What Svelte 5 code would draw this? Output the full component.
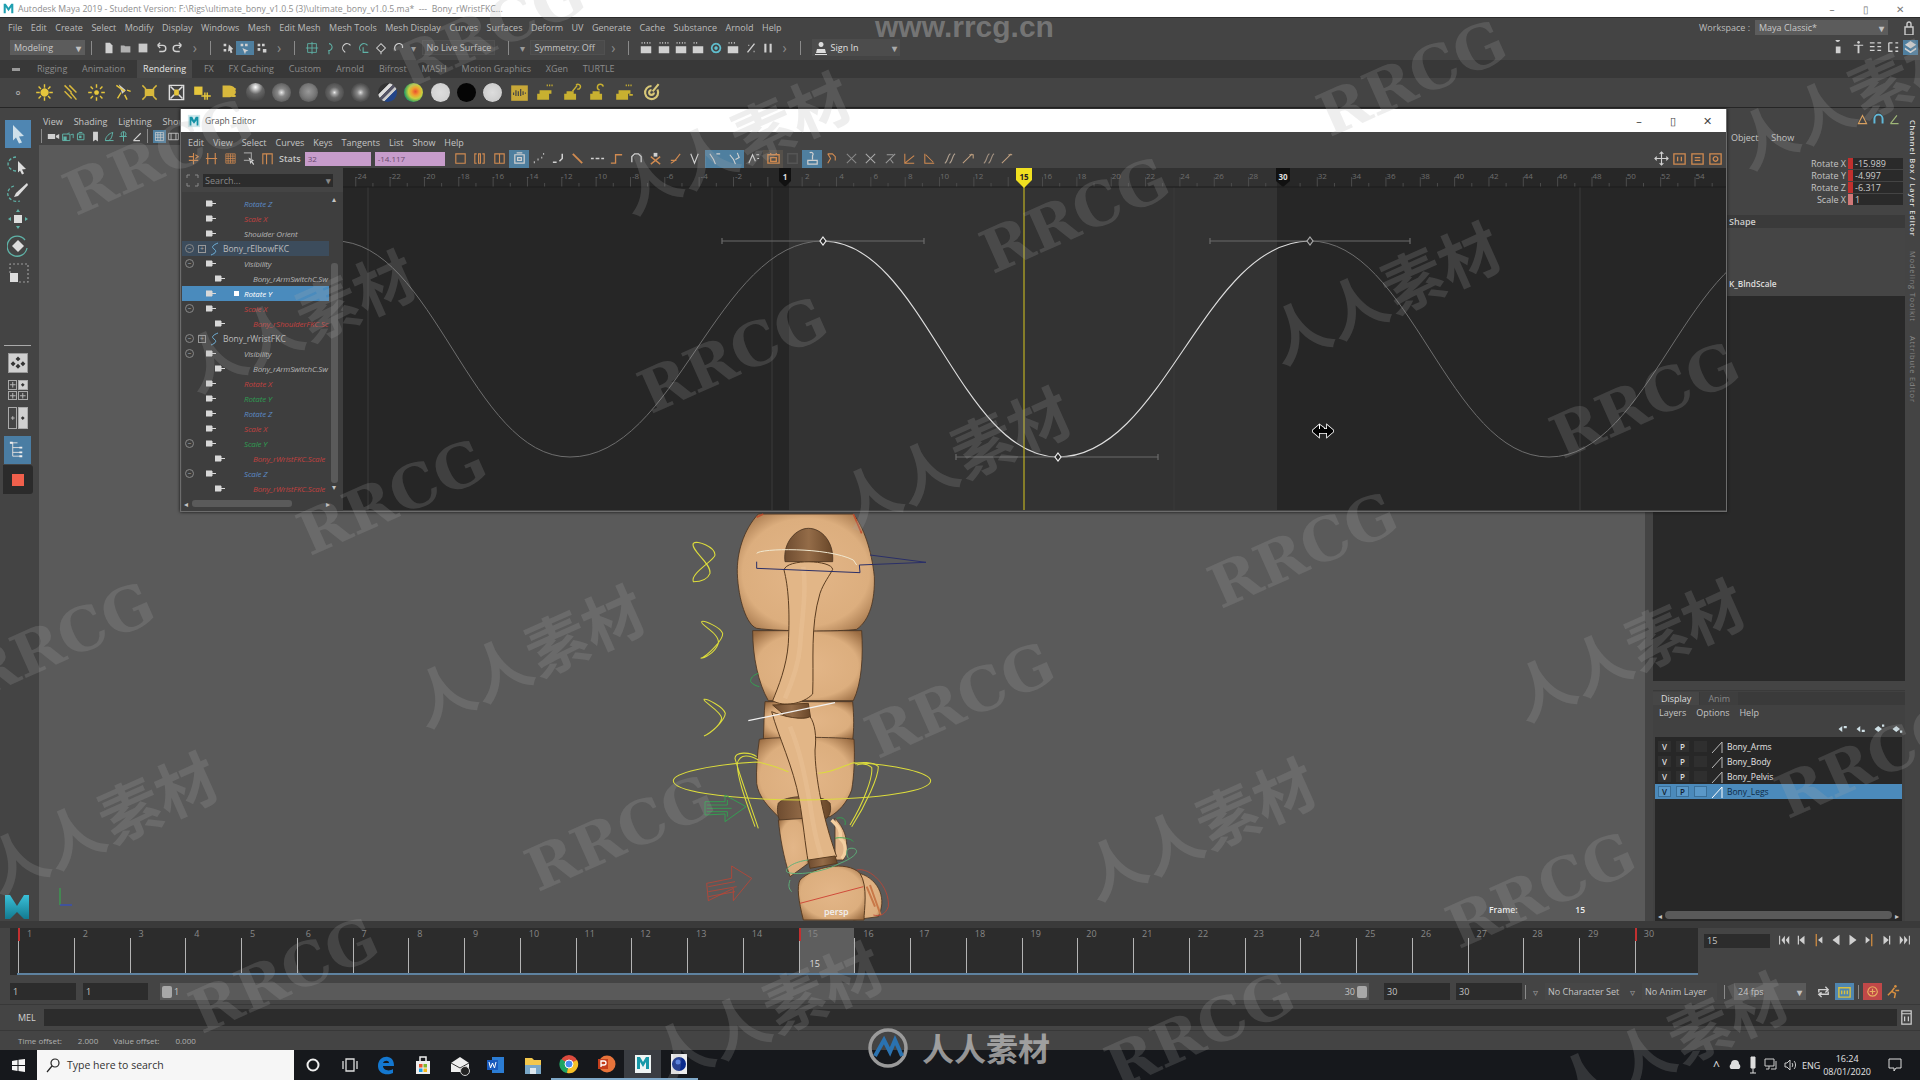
<script>
	// ---- toolbar icon data, 16x16 boxes ----
	const W = '#d0d0d0';
	const T = '#5fb3a8';
	const O = '#d08a50';
	const Y = '#d8c040';

	const menus = ['File','Edit','Create','Select','Modify','Display','Windows','Mesh','Edit Mesh','Mesh Tools','Mesh Display','Curves','Surfaces','Deform','UV','Generate','Cache','Substance','Arnold','Help'];
	const tabs = ['Rigging','Animation','Rendering','FX','FX Caching','Custom','Arnold','Bifrost','MASH','Motion Graphics','XGen','TURTLE'];

	const fileIcons = [
		{ f:'M4 2h5l3 3v9H4z', c:W },
		{ f:'M2 5h4l1 1h6v7H2z', c:'#b0b0b0' },
		{ f:'M3 3h10v10H3z', c:'#c8c8c8' },
		{ d:'M4 5h6a3 3 0 0 1 0 7H6M4 5l3-3M4 5l3 3', c:W, w:1.6 },
		{ d:'M12 5H6a3 3 0 0 0 0 7h4M12 5L9 2M12 5L9 8', c:W, w:1.6 }
	];
	const selIcons = [
		{ f:'M3 3h3v3H3zM3 9h3v3H3zM9 4l5 5-2 1 1 3-2 1-1-3-2 1z', c:W },
		{ f:'M3 3h3v3H3zM8 3h3v3H8zM5 8l7 3-3 1-1 3z', c:W, bg:'#4f7f9f' },
		{ f:'M3 3h3v3H3zM8 3h3v3H8zM3 8h3v3H3zM9 9h4v4H9z', c:W }
	];
	const snapIcons = [
		{ d:'M3 3h10v10H3zM8 1v14M1 8h14', c:T, w:1 },
		{ d:'M8 3a4 4 0 1 1-1 8M8 11v4', c:T },
		{ d:'M4 11a5 5 0 0 1 8-6M4 11l2 2', c:W },
		{ d:'M4 11a5 5 0 0 1 8-6M7 7v6h6', c:T },
		{ d:'M3 8l5-5 5 5-5 5zM8 13v2', c:W },
		{ d:'M4 11a5 5 0 0 1 8-6M12 5v3', c:W, w:1.4 }
	];
	const renderIcons = [
		{ f:'M2 6h12v8H2z', d:'M3 2h1M6 2h1M9 2h1M12 2h1', c:W, w:2 },
		{ f:'M2 6h12v8H2z', d:'M3 2h1M6 2h1M9 2h1M12 2h1', c:W, w:2 },
		{ f:'M2 6h12v8H2z', d:'M3 2h1M6 2h1M9 2h1M12 2h1', c:W, w:2 },
		{ f:'M2 6h12v8H2z', d:'M3 2h1M6 2h1', c:W, w:2 },
		{ d:'M8 3a5 5 0 1 0 .1 0', f:'M8 6a2 2 0 1 0 .1 0', c:'#60c0d0', w:2 },
		{ f:'M2 6h12v8H2z', d:'M3 2h1M6 2h1M9 2h1', c:W, w:2 },
		{ d:'M4 13L12 3M5 5h1M11 12h1', c:W, w:1.6 },
		{ d:'M5 3v10M11 3v10', c:W, w:2.4 }
	];

	const lightPath = 'M8 1v3M8 12v3M1 8h3M12 8h3M3 3l2 2M11 11l2 2M13 3l-2 2M5 11l-2 2';
	const shelf = [
		{ d:lightPath, f:'M8 4.500a3.500 3.500 0 1 0 .1 0', c:'#e6c63c' },
		{ d:'M3 2l6 6M7 2l6 6M3 7l6 6M8 8l5 6', c:'#d8b83c' },
		{ d:lightPath, f:'M8 6a2 2 0 1 0 .1 0', c:'#e6c63c' },
		{ d:'M2 2l7 5M3 13l3-5M11 6l3 1M9 10l2 4', f:'M4 1l6 5-3 3z', fc:W, c:'#e6c63c' },
		{ d:'M2 2l3 3M14 2l-3 3M2 14l3-3M14 14l-3-3', f:'M4 5h8v6H4z', c:'#d8b83c' },
		{ d:'M2 2h12v12H2zM3 3l3 3M13 3l-3 3M3 13l3-3M13 13l-3-3', f:'M6 5.500h4v5H6z', fc:'#e6c63c', c:'#ddd' },
		{ f:'M1 3h7v7H1z', d:'M10 8v6M7 11h8M12 8v6', c:'#e6c63c' },
		{ f:'M3 2h6a4 4 0 0 1 0 10H3z', d:'M11 5h3M11 8h3M11 11h3', c:'#d8b83c', w:1.6 },
		{ ball:'radial-gradient(circle at 50% 22%, #fff 0, #bbb 18%, #666 40%, #333 100%)' },
		{ ball:'radial-gradient(circle at 50% 50%, #e8e8e8 0, #888 30%, #444 100%)' },
		{ ball:'radial-gradient(circle at 50% 45%, #999 0, #777 50%, #444 100%)' },
		{ ball:'radial-gradient(circle at 50% 50%, #eee 0, #aaa 14%, #666 40%, #3a3a3a 100%)' },
		{ ball:'radial-gradient(circle at 50% 50%, #ddd 0, #888 25%, #555 60%, #333 100%)' },
		{ ball:'linear-gradient(135deg, #333 0 30%, #ddd 32% 42%, #556 44% 54%, #ccc 56% 64%, #224488 66% 100%)' },
		{ ball:'radial-gradient(circle at 60% 45%, #e85030 0, #f0a030 25%, #c8d040 45%, #30a060 70%, #1850a0 100%)' },
		{ ball:'radial-gradient(circle at 50% 50%, #ddd 0, #ccc 100%)' },
		{ ball:'#050505' },
		{ ball:'radial-gradient(circle at 50% 50%, #ddd 0, #ccc 72%, #000 74%)' },
		{ f:'M1 2h14v13H1z', d:'M3 8v2M5 6v5M7 7v4M9 5v6M11 7v3M13 8v1', fc:'#c8a838', c:'#444', w:1 },
		{ f:'M1 9h10v5H1zM3 6h10v3H3z', d:'M9 2h1M11 2h1M13 2h1', c:'#c8b030', w:1.4 },
		{ f:'M1 9h10v5H1zM3 7h6v2H3z', d:'M8 7l4-5M11 2a2 2 0 1 1 1 3', c:'#c8b030', w:1.2 },
		{ f:'M1 9h10v5H1zM3 7h6v2H3z', d:'M9 6a2.500 2.500 0 1 1 3-3', c:'#c8b030', w:1.2 },
		{ f:'M1 9h10v5H1zM3 6h10v3H3z', d:'M9 2h1M11 2h1M13 2h1M12 10h3', c:'#c8b030', w:1.4 },
		{ d:'M8 2.500a5.500 5.500 0 1 0 5 3M8 6a2 2 0 1 0 2 2M9 7l5-6', c:'#d8c878', w:1.8 }
	];

	const gtLeft = [
		{ d:'M8 2v12M3 6h5M3 10h10M10 4l3 2-3 2', c:O },
		{ d:'M4 2v12M12 2v12M2 8h12', c:O },
		{ d:'M3 3h10v10H3zM3 8h10M8 3v10M3 5.500h10M3 10.500h10M5.500 3v10M10.500 3v10', c:O, w:.8 },
		{ d:'M2 2h8v8H2', c:'#999', f:'M7 7l6 3-2 1 2 3-1 1-2-3-1 2z', fc:W },
		{ d:'M3 14V3h10v11M7 3v11', c:O }
	];
	const gtMid = [
		{ d:'M3 3h10v10H3z', c:O },
		{ d:'M5 3H3v10h2M11 3h2v10h-2M7 3h2v10H7z', c:O },
		{ d:'M3 3h10v10H3zM8 3v10', c:O },
		{ d:'M3 4h10v9H3zM5 2h6M6 7h4v3H6z', c:W, bg:'#4f7f9f', w:1.3 },
		{ d:'M3 12h1M7 9h1M11 7h1M13 3h1', c:W, w:2 },
		{ d:'M2 12h4M9 11l3-3V3', c:W, w:1.6 },
		{ d:'M3 3l10 10', c:O, w:2 },
		{ d:'M1 8h3M6 8h4M12 8h3', c:W, w:1.6 },
		{ d:'M2 13h5V4h7', c:O, w:1.4 },
		{ d:'M3 12V6l3-3h4l3 3v6', c:W, w:1.4 },
		{ d:'M3 14l10-8M3 6l10 8', f:'M6 2h4v4H6z', fc:W, c:O, w:1.4 },
		{ d:'M3 13c4-1 6-5 10-10M3 10h6', c:O, w:1.2 },
		{ d:'M4 3l4 10 4-10', c:W, w:1.2 },
		{ d:'M3 3l4 6 2 5M10 3h4', c:W, w:1.2, bg:'#4f7f9f' },
		{ d:'M3 4l4 5 2 5M11 2l2 5-4 2', c:W, w:1.2, bg:'#4f7f9f' },
		{ d:'M3 13l4-9 3 7M11 4h3M12 8h2', c:W, w:1.2 },
		{ d:'M2 4h12v9H2zM5 2v2M11 2v2M5 7h6v4H5z', c:O, bg:'#55504a', w:1.4 },
		{ d:'M3 3h10v10H3z', c:'#555', w:1.6 },
		{ d:'M5 2a2 2 0 1 1 3 3v4M3 10h10v4H3z', c:W, bg:'#4f7f9f', w:1.3 },
		{ d:'M4 3h5l3 3v4M4 3l3 5-3 5', c:O, w:1.2 },
		{ d:'M3 3l10 10M13 3L3 13', c:'#888', w:1.1 },
		{ d:'M3 3l10 10M13 3L3 13', c:'#aaa', w:1.1 },
		{ d:'M3 13L13 3M4 4h7M8 9l3 4', c:'#999', w:1.1 },
		{ d:'M3 3v10h10M3 13L13 5', c:O, w:1.1 },
		{ d:'M3 3v10h10M4 4l8 8', c:O, w:1.1 },
		{ d:'M3 13c3-1 3-9 6-10M8 13c3-1 3-9 6-10', c:'#b0a090', w:1.1 },
		{ d:'M2 13L12 3M9 4h4v4', c:'#c0a080', w:1.1 },
		{ d:'M3 13c3-1 3-9 6-10M8 13c3-1 3-9 6-10', c:'#a09080', w:1.1 },
		{ d:'M2 13L12 3M9 4h4', c:'#c0a080', w:1.1 }
	];
	const gtRight = [
		{ d:'M8 1v14M1 8h14M6 3l2-2 2 2M6 13l2 2 2-2M3 6L1 8l2 2M13 6l2 2-2 2', c:W },
		{ d:'M2 3h12v11H2zM6 6v5M10 6v5', c:O, w:1.4 },
		{ d:'M2 3h12v11H2zM5 7h6M5 10h6', c:O, w:1.4 },
		{ d:'M2 3h12v11H2zM8 6a2.500 2.500 0 1 0 .1 0', c:O, w:1.4 }
	];

	const panelIcons = [
		{ f:'M1 5h9v6H1zM11 7l4-2v6l-4-2z', c:W },
		{ d:'M2 5h9v8H2zM8 5l2-2M12 6l3-1v5', f:'M3 8h4v5H3z', fc:T, c:T },
		{ d:'M3 5h8v7H3zM3 5l2-2h4', f:'M5 7h3v3H5z', fc:T, c:T },
		{ f:'M5 2h6v12l-3-2-3 2z', c:W },
		{ d:'M3 13c0-5 5-9 9-10-1 4-1 8-5 10zM3 13h10', c:T },
		{ d:'M8 2v12M3 8h9M8 8a3 3 0 1 1 .1 0', c:T },
		{ d:'M3 13L12 4M3 13h8', c:W, w:1.4 }
	];

	const playIcons = [
		{ d:'M3 3v10', f:'M9 3L5 8l4 5zM14 3l-4 5 4 5z', c:W, w:1.2 },
		{ d:'M5 3v10', f:'M12 3L6 8l6 5z', c:W, w:1.4 },
		{ d:'M6 1v14', f:'M13 4L8 8l5 4z', c:'#d89040', fc:W, w:1.4 },
		{ f:'M12 2L4 8l8 6z', c:W },
		{ f:'M4 2l8 6-8 6z', c:W },
		{ d:'M10 1v14', f:'M3 4l5 4-5 4z', c:'#d89040', fc:W, w:1.4 },
		{ d:'M11 3v10', f:'M4 3l6 5-6 5z', c:W, w:1.4 },
		{ d:'M13 3v10', f:'M2 3l4 5-4 5zM7 3l4 5-4 5z', c:W, w:1.2 }
	];

	const taskIcons = [
		{ kind:'ring' }, { kind:'view' }, { kind:'edge' }, { kind:'store' }, { kind:'mail' },
		{ kind:'word' }, { kind:'files' }, { kind:'chrome' }, { kind:'ppt' }, { kind:'maya' }, { kind:'obs' }
	];

	// ---- graph outliner ----
	const BLUE = '#5c8ac6', RED = '#c0413f', GREEN = '#2e9c52', GREY = '#b4b4b4';
	const rows = [
		{ t:'Rotate Z', c:BLUE, k:'attr' },
		{ t:'Scale X', c:RED, k:'attr' },
		{ t:'Shoulder Orient', c:GREY, k:'attr' },
		{ t:'Bony_rElbowFKC', k:'node', sel:'node' },
		{ t:'Visibility', c:GREY, k:'attr', minus:true },
		{ t:'Bony_rArmSwitchC.Sw', c:GREY, k:'sub' },
		{ t:'Rotate Y', c:'#fff', k:'attr', sel:'row' },
		{ t:'Scale X', c:RED, k:'attr', minus:true },
		{ t:'Bony_rShoulderFKC.Sc', c:RED, k:'sub' },
		{ t:'Bony_rWristFKC', k:'node' },
		{ t:'Visibility', c:GREY, k:'attr', minus:true },
		{ t:'Bony_rArmSwitchC.Sw', c:GREY, k:'sub' },
		{ t:'Rotate X', c:RED, k:'attr' },
		{ t:'Rotate Y', c:GREEN, k:'attr' },
		{ t:'Rotate Z', c:BLUE, k:'attr' },
		{ t:'Scale X', c:RED, k:'attr' },
		{ t:'Scale Y', c:GREEN, k:'attr', minus:true },
		{ t:'Bony_rWristFKC.Scale', c:RED, k:'sub' },
		{ t:'Scale Z', c:BLUE, k:'attr', minus:true },
		{ t:'Bony_rWristFKC.Scale', c:RED, k:'sub' }
	];

	// ---- graph view, coordinates are page pixels ----
	const frameX = (f) => 785 + (f - 1) * 17.17;
	const rulerLabels = [];
	for (let f = -24; f <= 54; f += 2) {
		if (f !== 0 && f !== 14 && f !== 30) rulerLabels.push(f);
	}
	const rulerTicks = [];
	for (let f = -26; f <= 57; f++) rulerTicks.push(f);

	function seg(a, b) {
		const h = (b[0] - a[0]) * 0.42;
		return `C${a[0] + h} ${a[1]} ${b[0] - h} ${b[1]} ${b[0]} ${b[1]}`;
	}
	const pts = [[335,241],[570,457],[823,241],[1058,457],[1310,241],[1549,457],[1790,241]];
	const curveDimL = `M${pts[0]} ${seg(pts[0], pts[1])} ${seg(pts[1], pts[2])}`;
	const curveLit = `M${pts[2]} ${seg(pts[2], pts[3])} ${seg(pts[3], pts[4])}`;
	const curveDimR = `M${pts[4]} ${seg(pts[4], pts[5])} ${seg(pts[5], pts[6])}`;
	const keys = [
		{ x:823, y:241, l:722, r:924 },
		{ x:1058, y:457, l:956, r:1158 },
		{ x:1310, y:241, l:1210, r:1410 }
	];

	// ---- time slider ----
	const frames = Array.from({ length: 30 }, (_, i) => i + 1);
	const keyed = [1, 15, 30];

	const channels = [
		{ n:'Rotate X', v:'-15.989' },
		{ n:'Rotate Y', v:'-4.997' },
		{ n:'Rotate Z', v:'-6.317' },
		{ n:'Scale X', v:'1', pale:true }
	];
	const layers = ['Bony_Arms','Bony_Body','Bony_Pelvis','Bony_Legs'];

	// ---- watermarks, centre points ----
	const marksEn = [[158,157],[490,30],[392,497],[733,355],[1075,215],[1412,78],[60,640],[620,833],[960,700],[1303,550],[1645,400],[284,975],[1541,890],[1200,1030],[1870,760]];
	const marksCn = [[298,318],[733,140],[953,455],[1383,290],[1850,95],[527,653],[100,820],[1627,647],[1198,826],[765,1010],[1670,1040]];
</script>

{#snippet ico(i, size = 16)}
	<span class="icon" class:hl={i.bg} style:background={i.bg}>
		<svg width={size} height={size} viewBox="0 0 16 16" fill="none" stroke={i.c || W} stroke-width={i.w || 1.2}>
			{#if i.f}<path d={i.f} fill={i.fc || i.c || W} stroke="none" />{/if}
			{#if i.d}<path d={i.d} />{/if}
		</svg>
	</span>
{/snippet}

<div class="app">
	<header class="title">
		<svg width="11" height="13" viewBox="0 0 16 16"><path d="M1 15V1h3l4 6 4-6h3v14h-3V6L8 12 4 6v9z" fill="#1f9fb0" /></svg>
		<span class="title-text">Autodesk Maya 2019 - Student Version: F:\Rigs\ultimate_bony_v1.0.5 (3)\ultimate_bony_v1.0.5.ma*  ---  Bony_rWristFKC...</span>
		<div class="winbtns"><span>–</span><span>▯</span><span>✕</span></div>
	</header>

	<nav class="menu">
		{#each menus as m}<span>{m}</span>{/each}
		<div class="workspace">
			<span>Workspace :</span>
			<div class="combo wscombo">Maya Classic*<b>▾</b></div>
			<svg width="10" height="14" viewBox="0 0 10 14"><path d="M1 6h8v8H1zM3 6V3a2 2 0 0 1 4 0v3" fill="none" stroke="#ccc" stroke-width="1.400" /></svg>
		</div>
	</nav>

	<div class="status">
		<div class="combo modeling">Modeling<b>▾</b></div>
		<i class="sep"></i>
		<div class="group">{#each fileIcons as i}{@render ico(i, 14)}{/each}</div>
		<i class="chev">›</i><i class="sep"></i>
		<div class="group">{#each selIcons as i}{@render ico(i, 14)}{/each}</div>
		<i class="chev">›</i><i class="sep"></i>
		<div class="group">{#each snapIcons as i}{@render ico(i, 14)}{/each}</div>
		<i class="tri">▾</i>
		<div class="field livesurf">No Live Surface</div>
		<i class="sep"></i>
		<i class="tri symtri">▾</i>
		<div class="field sym">Symmetry: Off</div>
		<i class="chev">›</i><i class="sep"></i>
		<div class="group">{#each renderIcons as i}{@render ico(i, 14)}{/each}</div>
		<i class="chev">›</i><i class="sep"></i>
		<div class="signin">
			<svg width="12" height="14" viewBox="0 0 12 14"><path d="M6 1a2.500 2.500 0 1 0 .1 0zM2 8h8l1 4H1zM0 13h12v1H0z" fill="#ddd" /></svg>
			<span>Sign In</span><b>▾</b>
		</div>
		<div class="side-icons">
			{@render ico({ f:'M5 2a3 4 0 1 1 .1 0zM3 7h5v7H3z', c:W }, 15)}
			{@render ico({ f:'M8 1a1.500 1.500 0 1 0 .1 0zM3 5h10v1H3zM7 6h2v8H7z', c:W }, 15)}
			{@render ico({ d:'M2 3h5M10 3h4M2 7h5M10 7h4M2 11h5M10 11h4', c:W, w:1.4 }, 15)}
			{@render ico({ d:'M3 3h4M3 3v9h4M10 3h3M10 8h3M10 12h3', c:W, w:1.4 }, 15)}
			{@render ico({ f:'M8 1l6 4-6 4-6-4zM2 8l6 4 6-4v2l-6 4-6-4z', c:W, bg:'#4f7f9f' }, 15)}
		</div>
	</div>

	<div class="tabs">
		<i class="grip"></i>
		{#each tabs as t}<span class:active={t === 'Rendering'}>{t}</span>{/each}
	</div>

	<div class="shelf">
		<span class="shelf-grip">⚬</span>
		{#each shelf as s}
			<span class="shelf-item">
				{#if s.ball}
					<span class="ball" style:background={s.ball}></span>
				{:else}
					{@render ico(s, 19)}
				{/if}
			</span>
		{/each}
	</div>

	<div class="main">
		<aside class="toolbox">
			<div class="tool on"><svg viewBox="0 0 22 22"><path d="M6 2l11 11-5 .5 3 6-3 1-3-6-3 3z" fill="#cfe0ea" /></svg></div>
			<div class="tool"><svg viewBox="0 0 22 22"><path d="M9 3a8 6 0 1 0 3 14" fill="none" stroke={T} stroke-width="1.300" stroke-dasharray="3 2" /><path d="M11 7l8 8-4 .5 2 4-2 1-2-4-2 2z" fill="#ddd" /></svg></div>
			<div class="tool"><svg viewBox="0 0 22 22"><path d="M7 5a7 6 0 1 0 6 15" fill="none" stroke={T} stroke-width="1.300" stroke-dasharray="3 2" /><path d="M20 2L9 12l-2 4 4-1L21 4z" fill="#ddd" /></svg></div>
			<div class="tool"><svg viewBox="0 0 22 22"><path d="M7 7h8v8H7z" fill="#ddd" /><path d="M11 1l2 3H9zM11 21l-2-3h4zM1 11l3-2v4zM21 11l-3 2V9z" fill={T} /></svg></div>
			<div class="tool"><svg viewBox="0 0 22 22"><path d="M11 5l6 6-6 6-6-6z" fill="#ddd" /><path d="M18 5a10 10 0 1 0 2 8" fill="none" stroke={T} stroke-width="1.300" /></svg></div>
			<div class="tool"><svg viewBox="0 0 22 22"><path d="M3 11V2h18v18H12" fill="none" stroke="#999" stroke-width="1.200" stroke-dasharray="2 2" /><path d="M3 11h8v9H3z" fill="#ddd" /></svg></div>
			<div class="tool-gap"></div>
			<div class="tool-rule"></div>
			<div class="layout l1"><svg viewBox="0 0 22 22"><path d="M11 5l3 3-3 3-3-3zM5 11l3 3-3 3-3-3zM17 11l3 3-3 3-3-3zM11 14l3 3-3 3-3-3z" fill="#333" transform="translate(0 -2)" /></svg></div>
			<div class="layout l4">
				<i><svg viewBox="0 0 8 8"><path d="M4 1v6M1 4h6" stroke="#bbb" /></svg></i>
				<i class="w"><svg viewBox="0 0 8 8"><path d="M4 2l2 2-2 2-2-2z" fill="#333" /></svg></i>
				<i><svg viewBox="0 0 8 8"><path d="M4 1v6M1 4h6" stroke="#bbb" /></svg></i>
				<i><svg viewBox="0 0 8 8"><path d="M4 1v6M1 4h6" stroke="#bbb" /></svg></i>
			</div>
			<div class="layout l2">
				<i><svg viewBox="0 0 8 20"><path d="M4 8v4M2 10h4" stroke="#bbb" /></svg></i>
				<i class="w"><svg viewBox="0 0 8 20"><path d="M4 8l2 2-2 2-2-2z" fill="#333" /></svg></i>
			</div>
			<div class="layout on"><svg viewBox="0 0 22 22"><path d="M4 4h7M6 4v14h8M6 9h8M6 14h8" fill="none" stroke="#ddd" /><path d="M3 3h3v2H3zM13 8h3v2h-3zM13 13h3v2h-3zM13 17h3v2h-3z" fill="#eee" /></svg></div>
			<div class="rec"><i></i></div>
			<div class="maya-logo">
				<svg width="28" height="26" viewBox="0 0 28 26">
					<defs><linearGradient id="mg" x1="0" y1="0" x2="0" y2="1"><stop offset="0" stop-color="#3ac0d8" /><stop offset="1" stop-color="#137a90" /></linearGradient></defs>
					<path d="M2 25V1h5l7 11 7-11h5v24h-5L14 18 7 25z" fill="url(#mg)" />
				</svg>
			</div>
		</aside>

		<section class="viewport">
			<div class="panelmenu">
				<span>View</span><span>Shading</span><span>Lighting</span><span>Show</span>
			</div>
			<div class="paneltools">
				<i class="sep"></i>
				{#each panelIcons as i}{@render ico(i, 13)}{/each}
				<i class="sep"></i>
				{@render ico({ d:'M3 3h10v10H3zM3 6h10M3 9h10M6 3v10M9 3v10', c:W, w:.9, bg:'#4f7f9f' }, 13)}
				{@render ico({ d:'M2 4h12v8H2zM5 4v8M11 4v8', c:W, w:1 }, 13)}
			</div>
			<div class="canvas">
				<svg class="leg" viewBox="0 0 960 1260" width="320" height="420">
					<defs>
						<radialGradient id="skin" cx="0.5" cy="0.5" r="0.66">
							<stop offset="0" stop-color="#e3b688" />
							<stop offset="0.7" stop-color="#dcae7e" />
							<stop offset="1" stop-color="#9a6c42" />
						</radialGradient>
						<linearGradient id="dark" x1="0" y1="0" x2="1" y2="0">
							<stop offset="0" stop-color="#6e4c30" />
							<stop offset="0.5" stop-color="#946c48" />
							<stop offset="1" stop-color="#684628" />
						</linearGradient>
					</defs>
					<g stroke="#4a3420" stroke-width="2.500">
						<path d="M660 1090C720 1110 740 1170 715 1220L640 1230Z" fill="url(#skin)" />
						<path d="M585 925C620 960 630 1010 610 1050L585 1050Z" fill="#e0b488" />
						<path d="M375 575H638C642 620 642 660 638 690H370C372 650 372 610 375 575Z" fill="url(#skin)" />
						<path d="M338 362H665C670 440 665 520 640 572H385C355 520 338 440 338 362Z" fill="url(#skin)" />
						<path d="M358 688C400 680 600 680 642 688C645 740 642 800 635 840C620 880 595 905 570 920H415C385 890 355 860 350 820C348 780 352 730 358 688Z" fill="url(#skin)" />
						<path d="M355 12C310 60 290 130 292 190C295 270 320 345 350 355C420 365 600 365 650 358C690 330 705 270 703 200C695 120 670 50 640 12Z" fill="url(#skin)" />
						<path d="M415 880C430 855 550 850 570 880C575 900 570 915 560 925L420 935C412 915 410 895 415 880Z" fill="url(#dark)" />
						<path d="M415 930L495 925C495 970 505 1020 505 1060L450 1100C430 1040 420 980 415 930Z" fill="url(#skin)" />
						<path d="M435 155C428 95 470 55 505 55C545 55 582 95 578 155Z" fill="url(#dark)" />
					</g>
					<g stroke="#5a3c20" stroke-width="3" fill="#e2b687">
						<path d="M432 180C445 230 450 300 445 400C440 470 415 530 398 572C430 592 490 582 518 552C522 450 510 350 540 250C550 220 570 195 578 178C575 150 440 145 432 180Z" />
						<path d="M398 585L505 580L512 625H445Z" fill="url(#dark)" />
						<path d="M395 605C430 620 490 632 510 620C525 640 530 680 525 720C525 800 550 930 590 1040L505 1058C495 1000 490 940 478 870C460 770 415 680 395 605Z" />
						<path d="M505 1050L585 1038L592 1060L510 1075Z" fill="url(#dark)" />
						<path d="M480 1110C520 1070 620 1050 660 1090C685 1130 672 1200 672 1230H490C475 1170 470 1130 480 1110Z" fill="url(#skin)" />
					</g>
					<path d="M490 170C500 250 485 330 480 410C475 470 455 520 435 565M450 650C480 720 495 800 510 880C520 950 530 1000 545 1040" fill="none" stroke="#f2cfa6" stroke-width="14" opacity="0.25" />
					<path d="M575 930C595 950 605 960 600 985C620 1000 620 1030 605 1045" fill="none" stroke="#f4cfa0" stroke-width="10" />
					<path d="M690 1125L722 1215M680 1130L705 1190" stroke="#c87848" stroke-width="6" fill="none" />
					<g fill="none" stroke-width="3.200" stroke="#dcdc3c">
						<path d="M160 215C150 190 225 150 225 135C225 110 170 90 160 100C150 120 215 160 210 190C200 215 170 215 160 215Z" />
						<path d="M182 445C200 440 250 390 248 370C240 350 190 330 185 335C180 345 240 370 235 400C225 430 190 445 182 445Z" />
						<path d="M192 678C215 670 255 630 256 610C250 590 200 565 192 568C188 575 245 605 245 625C240 650 200 675 192 678Z" />
						<path d="M350 756C200 765 100 790 100 812C100 840 230 868 485 870C740 868 872 840 872 812C872 790 770 762 640 758C600 772 570 790 535 790M350 756C380 760 420 775 445 785" />
						<path d="M355 955C330 880 300 800 285 745C285 725 330 725 350 740M345 950C320 880 290 800 292 760C300 730 330 735 355 750" />
						<path d="M635 950C680 880 715 800 715 770C700 755 660 755 645 762M630 945C670 880 700 800 695 772C680 760 660 762 650 765" />
					</g>
					<g fill="none" stroke="#2fa850" stroke-width="2.600">
						<path d="M195 875H255V855L318 890L255 935V912L195 915Z" />
						<path d="M200 885H262V870M200 895H275M200 905H262V920" />
						<path d="M355 490C340 495 330 505 332 515C340 525 350 528 358 530" />
						<path d="M590 925C605 920 620 925 615 945M585 985C600 980 635 985 640 995" />
					</g>
					<g fill="none" stroke="#5cb078" stroke-width="2.800">
						<path d="M505 1050C460 1055 435 1075 440 1085C450 1095 530 1095 600 1060C650 1040 660 1020 640 1015C620 1012 615 1025 625 1045" />
						<path d="M450 1110C445 1125 445 1135 455 1145" />
					</g>
					<g fill="none" stroke="#c04434" stroke-width="2.400">
						<path d="M200 1120L275 1105V1068L335 1105L280 1172V1135L205 1172Z" />
						<path d="M205 1130L285 1115M205 1145L290 1130M205 1160L285 1145" />
						<path d="M650 1080C690 1070 750 1130 745 1190C735 1215 720 1220 700 1215" />
					</g>
					<path d="M480 1180L670 1130" stroke="#d04b3a" stroke-width="3" />
					<path d="M350 130C360 115 560 110 640 150L650 165" fill="none" stroke="#f0e8d0" stroke-width="3" />
					<path d="M350 155V175L660 188L658 165L858 157L690 135" fill="none" stroke="#2a2f68" stroke-width="3" />
					<path d="M325 632L585 578" stroke="#f2f2f2" stroke-width="3.500" />
					<path d="M350 22L370 12M640 12L665 70" stroke="#c05030" stroke-width="5" fill="none" />
				</svg>
				<svg class="axis" width="22" height="26" viewBox="0 0 22 26" fill="none" stroke-width="1.300">
					<path d="M3 3V20" stroke="#3aa050" />
					<path d="M3 20H15" stroke="#3550c0" />
				</svg>
				<span class="persp">persp</span>
				<div class="frame-hud"><span>Frame:</span><span>15</span></div>
			</div>
		</section>

		<aside class="right">
			<div class="right-main">
				<div class="cb-top">
					{@render ico({ d:'M3 13L8 3l5 10z', c:'#d8a060', w:1.4 }, 13)}
					{@render ico({ d:'M3 13V7a5 5 0 0 1 10 0v6', c:'#60b8d8', w:2.4 }, 13)}
					{@render ico({ d:'M3 13h10M3 13L11 3', c:'#a0b878', w:1.4 }, 13)}
				</div>
				<div class="cb-menu"><span>Object</span><span>Show</span></div>
				<div class="channels">
					{#each channels as ch}
						<div class="ch">
							<label>{ch.n}</label>
							<i class:pale={ch.pale}></i>
							<span>{ch.v}</span>
						</div>
					{/each}
				</div>
				<div class="shape-head">Shape</div>
				<div class="shape-body"><span>K_BlndScale</span></div>
				<div class="cb-empty"></div>
				<div class="dots"></div>
				<div class="layer-ed">
					<div class="le-tabs"><span class="active">Display</span><span>Anim</span></div>
					<div class="le-menu"><span>Layers</span><span>Options</span><span>Help</span></div>
					<div class="le-tools">
						{#each ['M2 8l5-4v8zM9 4h4v3H9z','M2 8l5-4v8zM9 9h4v3H9z','M2 8l5-4 5 4-5 4zM12 2h3v3h-3z','M2 8l5-4 5 4-5 4zM12 10h3v3h-3z'] as d}
							{@render ico({ f:d, c:'#cfe0e6' }, 12)}
						{/each}
					</div>
					<div class="le-list">
						{#each layers as l}
							<div class="le-row" class:sel={l === 'Bony_Legs'}>
								<span class="b">V</span><span class="b">P</span><span class="b"></span>
								<svg width="11" height="12" viewBox="0 0 11 12"><path d="M0 12L10 1V12" fill="none" stroke={l === 'Bony_Legs' ? '#fff' : '#bbb'} /></svg>
								<em>{l}</em>
							</div>
						{/each}
						<div class="le-scroll"><i class="l">◂</i><u></u><i>▸</i></div>
					</div>
				</div>
			</div>
			<div class="vtabs">
				<span class="on">Channel Box / Layer Editor</span>
				<span>Modeling Toolkit</span>
				<span>Attribute Editor</span>
			</div>
		</aside>
	</div>

	<div class="timeslider">
		<div class="ts">
			{#each frames as f}
				<div class="fr" class:cur={f === 15} class:key={keyed.includes(f)}>
					<span>{f}</span>
					{#if f === 15}<span class="curlabel">15</span>{/if}
				</div>
			{/each}
		</div>
		<div class="curfield">15</div>
		<div class="play">{#each playIcons as i}{@render ico(i, 14)}{/each}</div>
	</div>

	<div class="range">
		<div class="num first">1</div>
		<div class="num second">1</div>
		<div class="bar"><i></i><span>1</span><em>30</em><i></i></div>
		<div class="num third">30</div>
		<div class="num fourth">30</div>
		<i class="sep"></i>
		<i class="tri">▿</i>
		<div class="pick charset">No Character Set</div>
		<i class="tri">▿</i>
		<div class="pick animl">No Anim Layer</div>
		<i class="sep"></i>
		<div class="combo fps">24 fps<b>▾</b></div>
		<div class="range-icons">
			{@render ico({ d:'M3 9V6h9M10 3l3 3-3 3M13 8v3H4M6 14l-3-3 3-2', c:W, w:1.5 }, 15)}
			{@render ico({ d:'M2 4h12v10H2zM5 7v4M8 7v4M11 7v4', c:Y, bg:'#4f86b0', w:1.5 }, 15)}
			<i class="sep"></i>
			{@render ico({ d:'M8 3a5 5 0 1 0 .1 0M8 5v6M5 8h6', c:'#e8b060', bg:'#c04848', w:1.2 }, 15)}
			{@render ico({ f:'M10 1a1.500 1.500 0 1 0 .1 0z', d:'M9 4L6 8l4 2-1 5M6 8L2 12M10 7h4', c:'#d89040', w:1.6 }, 15)}
		</div>
	</div>

	<div class="mel">
		<span class="mel-l">MEL</span>
		<div class="mel-in"></div>
		{@render ico({ d:'M3 1h10v14H3zM3 4h10M6 7v5M10 7v5', c:W, w:1.3 }, 15)}
	</div>

	<div class="help">
		<span>Time offset:</span><span class="v1">2.000</span><span class="v2">Value offset:</span><span class="v3">0.000</span>
	</div>

	<footer class="taskbar">
		<svg class="win" width="13" height="13" viewBox="0 0 13 13"><path d="M0 2l5.500-1v5H0zM6.500.8L13 0v6H6.500zM0 7h5.500v5L0 11zM6.500 7H13v6l-6.500-1z" fill="#f4f4f4" /></svg>
		<div class="search">
			<svg width="14" height="16" viewBox="0 0 14 16" fill="none" stroke="#222" stroke-width="1.200"><circle cx="9" cy="6" r="4" /><path d="M6 9l-5 6" /></svg>
			<span>Type here to search</span>
		</div>
		<div class="task-icons">
			{#each taskIcons as t}
				<span class="ti" class:active={t.kind === 'maya'} class:run={['chrome','ppt','maya','obs'].includes(t.kind)}>
					<svg width="22" height="22" viewBox="0 0 22 22">
						{#if t.kind === 'ring'}
							<circle cx="11" cy="11" r="5.500" fill="none" stroke="#eee" stroke-width="2" />
						{:else if t.kind === 'view'}
							<path d="M7 5h8v12H7zM4 7v8M18 7v8" fill="none" stroke="#ddd" stroke-width="1.300" />
						{:else if t.kind === 'edge'}
							<path d="M3 12C3 5 9 2 13 3c5 1 6 5 6 9H8c0 4 6 6 10 3v4c-6 3-15 1-15-7zM8 9h6c0-3-5-3-6 0z" fill="#1478d0" />
						{:else if t.kind === 'store'}
							<path d="M4 7h14v13H4z" fill="#eee" /><path d="M8 7V3h6v4" fill="none" stroke="#eee" stroke-width="1.500" />
							<path d="M7 10h3.500v3.500H7z" fill="#e8532a" /><path d="M11.500 10H15v3.500h-3.500z" fill="#7fb82c" /><path d="M7 14.500h3.500V18H7z" fill="#1da1e8" /><path d="M11.500 14.500H15V18h-3.500z" fill="#f5b81a" />
						{:else if t.kind === 'mail'}
							<path d="M2 9l9-6 9 6v9H2z" fill="#eee" /><path d="M2 9l9 5 9-5" fill="none" stroke="#333" />
							<circle cx="16" cy="17" r="4.500" fill="#222" stroke="#ccc" />
						{:else if t.kind === 'word'}
							<path d="M7 3h12v16H7z" fill="#2b7cd3" /><path d="M2 6h11v10H2z" fill="#185abd" /><path d="M4 8l1.500 6 2-5 2 5L11 8" fill="none" stroke="#fff" />
						{:else if t.kind === 'files'}
							<path d="M3 4h7l2 2h7v14H3z" fill="#f3c74c" /><path d="M3 11h16v9H3z" fill="#7aa8c8" /><path d="M8 14h6v6H8z" fill="#dfe8ee" />
						{:else if t.kind === 'chrome'}
							<circle cx="11" cy="11" r="9" fill="#dd4b3e" /><path d="M11 11L3 6a9 9 0 0 0 6 14z" fill="#1fa463" /><path d="M11 11l8-4a9 9 0 0 1-10 13z" fill="#f6c027" /><circle cx="11" cy="11" r="4" fill="#4a8cf0" stroke="#fff" />
						{:else if t.kind === 'ppt'}
							<circle cx="12" cy="11" r="8.500" fill="#e8743b" /><path d="M3 6h10v10H3z" fill="#c43e1c" /><path d="M6 14V8h3a2 2 0 0 1 0 4H6" fill="none" stroke="#fff" stroke-width="1.300" />
						{:else if t.kind === 'maya'}
							<path d="M3 2h16v18H3z" fill="#eef4f4" /><path d="M5 16V4h3l3 5 3-5h3v12h-3V9l-3 5-3-5v7z" fill="#1798a8" />
						{:else}
							<path d="M3 1h16v20H3z" fill="#eee" /><circle cx="11" cy="11" r="7" fill="#0a2a8c" /><circle cx="10" cy="9" r="2.500" fill="#4a7ae8" />
						{/if}
					</svg>
				</span>
			{/each}
		</div>
		<div class="tray">
			<span class="caret">^</span>
			<svg width="14" height="10" viewBox="0 0 14 10"><path d="M3 9a3 3 0 0 1 0-5 4 4 0 0 1 8 0 3 3 0 0 1 0 5z" fill="#ddd" /></svg>
			<svg width="10" height="18" viewBox="0 0 10 18"><path d="M3 1h4v11H3zM5 12v5M2 17h6" fill="#ddd" stroke="#ddd" /></svg>
			<svg width="14" height="14" viewBox="0 0 14 14" fill="none" stroke="#ccc"><path d="M1 1h9v7H1zM5 8v3H2M7 11h5M12 3v8" /></svg>
			<svg width="12" height="12" viewBox="0 0 12 12" fill="none" stroke="#ccc"><path d="M1 4h2l3-3v10L3 8H1zM8 4c1 1 1 3 0 4M10 2c2 2 2 6 0 8" /></svg>
			<span class="eng">ENG</span>
			<div class="clock"><span>16:24</span><span>08/01/2020</span></div>
			<svg width="14" height="14" viewBox="0 0 14 14" fill="none" stroke="#ddd"><path d="M1 1h12v9H8l-2 3v-3H1z" /></svg>
		</div>
	</footer>

	<!-- floating graph editor window -->
	<div class="graph-win">
		<div class="gw-title">
			<svg width="14" height="14" viewBox="0 0 16 16"><path d="M1 1h14v14H1z" fill="#cfe8ec" /><path d="M3 13V3h3l2 4 2-4h3v10h-2V7l-3 4-3-4v6z" fill="#1592a6" /></svg>
			<span>Graph Editor</span>
			<div class="gw-btns"><span>–</span><span>▯</span><span>✕</span></div>
		</div>
		<nav class="gw-menu">
			{#each ['Edit','View','Select','Curves','Keys','Tangents','List','Show','Help'] as m}<span>{m}</span>{/each}
		</nav>
		<div class="gw-tools">
			{#each gtLeft as i}{@render ico(i, 15)}{/each}
			<span class="stats">Stats</span>
			<span class="pink p1">32</span>
			<span class="pink p2">-14.117</span>
			<div class="gt-mid">{#each gtMid as i}{@render ico(i, 15)}{/each}</div>
			<div class="gt-right">{#each gtRight as i}{@render ico(i, 15)}{/each}</div>
		</div>
		<div class="gw-body">
			<div class="outl">
				<div class="outl-search">
					<svg width="13" height="13" viewBox="0 0 13 13" fill="none" stroke="#888"><path d="M1 4V1h3M9 1h3v3M12 9v3H9M4 12H1V9" /></svg>
					<div class="sbox"><span>Search...</span><b>▾</b></div>
				</div>
				<div class="outl-list">
					{#each rows as r}
						<div class="orow {r.k}" class:selnode={r.sel === 'node'} class:selrow={r.sel === 'row'}>
							{#if r.minus || r.k === 'node'}<span class="minus">–</span>{/if}
							{#if r.k === 'node'}
								<span class="plus">+</span>
								<svg width="11" height="14" viewBox="0 0 11 14" fill="none" stroke="#6fb0d8"><path d="M9 1C4 3 2 5 5 7s2 4-3 6" /></svg>
							{:else}
								<svg class="gate" width="10" height="7" viewBox="0 0 10 7"><path d="M0 1h6v5H0zM6 3.500h4" fill="#d8d8d8" stroke="#d8d8d8" /></svg>
								{#if r.sel === 'row'}<i class="wbox"></i>{/if}
							{/if}
							<span class="otext" style:color={r.c}>{r.t}</span>
						</div>
					{/each}
				</div>
				<div class="vscroll"><i>▴</i><u></u><i>▾</i></div>
				<div class="hscroll"><i>◂</i><u></u><i class="rt">▸</i></div>
			</div>
			<svg class="graph" viewBox="343 168 1383 342" width="1383" height="342">
				<rect x="343" y="168" width="1383" height="342" fill="#262626" />
				<rect x="789" y="187" width="488" height="323" fill="#333" />
				<path d="M368 187V510M772 187V510M1174 187V510M1580 187V510" stroke="#3a3a3a" />
				<rect x="343" y="168" width="446" height="19" fill="#272727" />
				<rect x="789" y="168" width="488" height="19" fill="#323232" />
				<rect x="1277" y="168" width="449" height="19" fill="#272727" />
				{#each rulerTicks as f}
					<path d="M{frameX(f)} {f % 2 === 0 ? 177 : 183}V187" stroke="#4c4c4c" />
				{/each}
				{#each rulerLabels as f}
					<text class="rl" x={frameX(f) + 5} y="179">{f}</text>
				{/each}
				<path d="M343 187H1726" stroke="#1c1c1c" />
				<path d={curveDimL} fill="none" stroke="#6e6e6e" />
				<path d={curveDimR} fill="none" stroke="#6e6e6e" />
				<path d={curveLit} fill="none" stroke="#dedede" stroke-width="1.100" />
				{#each keys as k, n}
					<path d="M{k.l} {k.y}H{k.r}M{k.l} {k.y - 3}v6M{k.r} {k.y - 3}v6" stroke="#6a6a6a" stroke-width="1.200" />
					<path d="M{k.x} {k.y - 4}l3 4-3 4-3-4z" fill="#2a2a2a" stroke={n === 2 ? '#aaa' : '#eee'} stroke-width="1.200" />
				{/each}
				<path d="M1024 187V510" stroke="#d8c820" />
				<path d="M779 168h12v13l-6 6-6-6z" fill="#111" />
				<text class="tag w" x="785" y="180">1</text>
				<path d="M1276 168h14v13l-7 6-7-6z" fill="#111" />
				<text class="tag w" x="1283" y="180">30</text>
				<path d="M1016 168h16v12l-8 8-8-8z" fill="#f0e020" />
				<text class="tag k" x="1024" y="180">15</text>
				<path d="M1315 428h3v-2l-4-3v4h-1v-4l-6 5v2l6 5v-4h8v4l6-5v-2l-6-5v4h-6z" fill="#000" transform="translate(6 2)" stroke="#fff" stroke-width="1.600" paint-order="stroke" />
			</svg>
		</div>
	</div>

	<!-- repeated site watermark over the whole screen -->
	<div class="marks">
		{#each marksEn as m}
			<span class="mark en" style:left="{m[0]}px" style:top="{m[1]}px">RRCG</span>
		{/each}
		{#each marksCn as m}
			<span class="mark cn" style:left="{m[0]}px" style:top="{m[1]}px">人人素材</span>
		{/each}
		<span class="site">www.rrcg.cn</span>
		<svg class="site-logo" width="44" height="44" viewBox="0 0 44 44" fill="none">
			<circle cx="22" cy="22" r="18" stroke="#9a9a9a" stroke-width="3.500" />
			<path d="M9 30L18 14l6 12 5-12 7 16" stroke="#2a72b0" stroke-width="4" />
		</svg>
		<span class="site-cn">人人素材</span>
	</div>
</div>

<style>
	:global(body) {
		margin: 0;
		background: #444;
	}
	.app {
		position: relative;
		width: 1920px;
		height: 1080px;
		overflow: hidden;
		display: flex;
		flex-direction: column;
		font-family: "Open Sans", "Liberation Sans", sans-serif;
		font-size: 9px;
		color: #c4c4c4;
		background: #444;
	}
	svg {
		display: block;
		flex: none;
	}
	.icon {
		display: inline-flex;
		align-items: center;
		justify-content: center;
		flex: none;
	}
	i {
		font-style: normal;
	}
	.sep {
		flex: none;
		width: 1px;
		height: 14px;
		background: #8a8a8a;
	}

	/* top of the window */
	.title {
		height: 17px;
		background: #fff;
		color: #8e8e8e;
		display: flex;
		align-items: center;
		gap: 4px;
		padding-left: 3px;
		white-space: pre;
		flex: none;
		font-size: 8.700px;
	}
	.winbtns {
		margin-left: auto;
		display: flex;
		padding-right: 3px;
		font-size: 10px;
		color: #777;
	}
	.winbtns span,
	.gw-btns span {
		width: 34px;
		text-align: center;
	}
	.menu {
		height: 20px;
		flex: none;
		display: flex;
		align-items: center;
		gap: 8.500px;
		padding-left: 8px;
		border-top: 1px solid #2c2c2c;
		box-sizing: border-box;
		color: #bcbcbc;
	}
	.workspace {
		margin-left: auto;
		display: flex;
		align-items: center;
		padding-right: 6px;
		gap: 5px;
	}
	.wscombo {
		width: 133px;
		background: #5a5a5a;
		margin-right: 11px;
		height: 16px;
	}
	.status {
		height: 23px;
		flex: none;
		display: flex;
		align-items: center;
		padding: 0 0 2px 10px;
		box-sizing: border-box;
	}
	.combo {
		display: flex;
		align-items: center;
		justify-content: space-between;
		box-sizing: border-box;
		padding: 0 4px;
		background: #5c5c5c;
		color: #c8c8c8;
		height: 15px;
	}
	.combo b {
		font-size: 10px;
		color: #c0c0c0;
	}
	.modeling {
		width: 75px;
		margin-right: 6px;
	}
	.group {
		display: flex;
		margin-left: 8px;
	}
	.group :global(.icon) {
		width: 17.400px;
	}
	.chev {
		color: #8c8c8c;
		font-size: 14px;
		width: 12px;
		text-align: center;
		margin: 0 9px 0 2px;
		line-height: 1;
	}
	.tri {
		color: #9a9a9a;
		font-size: 10px;
		width: 12px;
		text-align: center;
	}
	.symtri {
		margin-left: 7px;
	}
	.field {
		height: 15px;
		display: flex;
		align-items: center;
		box-sizing: border-box;
		padding-left: 3px;
		background: #4a4a4a;
		border: 1px solid #505050;
	}
	.livesurf {
		width: 73px;
		margin: 0 13px 0 3px;
	}
	.sym {
		width: 75px;
		margin-left: 2px;
	}
	.signin {
		display: flex;
		align-items: center;
		box-sizing: border-box;
		width: 88px;
		height: 17px;
		gap: 4px;
		margin-left: 11px;
		padding: 0 3px;
		background: #4c4c4c;
		color: #e0e0e0;
		font-size: 9px;
	}
	.signin b {
		margin-left: auto;
		font-size: 10px;
		color: #aaa;
	}
	.side-icons {
		margin-left: auto;
		display: flex;
		gap: 2.500px;
		padding-right: 2px;
	}
	.tabs {
		height: 18px;
		flex: none;
		background: #383838;
		display: flex;
		align-items: center;
		gap: 10.800px;
		padding-left: 35px;
		box-sizing: border-box;
		position: relative;
		color: #8c8c8c;
	}
	.grip {
		position: absolute;
		left: 12px;
		top: 8px;
		width: 8px;
		height: 3px;
		background: #999;
	}
	.tabs span {
		padding: 0 2px;
		line-height: 18px;
	}
	.tabs .active {
		background: #484848;
		color: #e6e6e6;
		padding: 0 6px;
		margin: 0 -1px;
	}
	.shelf {
		height: 30px;
		flex: none;
		display: flex;
		align-items: center;
		padding-left: 31px;
		position: relative;
		border-bottom: 1px solid #262626;
		box-sizing: border-box;
	}
	.shelf-grip {
		position: absolute;
		left: 13px;
		color: #aaa;
		font-size: 12px;
	}
	.shelf-item {
		flex: 0 0 26.400px;
		display: flex;
		justify-content: center;
	}
	.ball {
		width: 19px;
		height: 19px;
		border-radius: 50%;
	}

	/* main row */
	.main {
		height: 813px;
		flex: none;
		display: flex;
	}
	.toolbox {
		position: relative;
		width: 35px;
		flex: none;
		display: flex;
		flex-direction: column;
		align-items: center;
		padding-top: 12px;
		box-sizing: border-box;
		margin-right: 4px;
	}
	.tool {
		width: 26px;
		height: 27px;
		display: flex;
		align-items: center;
		justify-content: center;
		box-sizing: border-box;
	}
	.tool svg {
		width: 22px;
		height: 22px;
	}
	.tool.on {
		background: #4f86b2;
		height: 28px;
		margin-bottom: 3px;
	}
	.tool-gap {
		height: 59px;
	}
	.tool-rule {
		width: 27px;
		height: 1px;
		background: #aaa;
		margin-bottom: 7px;
	}
	.layout {
		width: 20px;
		height: 20px;
		box-sizing: border-box;
		margin-bottom: 7px;
	}
	.layout.l1 {
		background: #d0d0d0;
		border: 1px solid #999;
	}
	.layout.l4 {
		display: grid;
		grid-template-columns: 1fr 1fr;
		gap: 1px;
	}
	.layout.l2 {
		display: flex;
		gap: 1px;
		height: 22px;
	}
	.layout.l4 i,
	.layout.l2 i {
		flex: 1;
		border: 1px solid #aaa;
		box-sizing: border-box;
		min-width: 0;
		min-height: 0;
	}
	.layout i svg {
		width: 100%;
		height: 100%;
	}
	.layout i.w {
		background: #d0d0d0;
	}
	.layout.on {
		width: 27px;
		height: 28px;
		background: #4a7da3;
		padding: 3px;
		margin-bottom: 1px;
	}
	.rec {
		width: 30px;
		height: 29px;
		background: #2b2b2b;
		border-radius: 0 3px 3px 0;
		display: flex;
		align-items: center;
		justify-content: center;
	}
	.rec i {
		width: 12px;
		height: 12px;
		background: #f0604c;
	}
	.maya-logo {
		position: absolute;
		left: 3px;
		bottom: 1px;
	}
	.viewport {
		flex: none;
		width: 1606px;
		display: flex;
		flex-direction: column;
	}
	.panelmenu {
		height: 21px;
		padding: 5px 0 0 4px;
		box-sizing: border-box;
		display: flex;
		align-items: center;
		gap: 11px;
	}
	.paneltools {
		height: 16px;
		box-sizing: border-box;
		display: flex;
		align-items: center;
		gap: 1px;
		padding-bottom: 2px;
	}
	.paneltools > .sep {
		margin: 0 4px 0 2px;
	}
	.canvas {
		flex: 1;
		position: relative;
		background: #5a5a5a;
		overflow: hidden;
	}
	.leg {
		position: absolute;
		left: 601px;
		top: 365px;
	}
	.axis {
		position: absolute;
		left: 18px;
		top: 740px;
	}
	.persp {
		position: absolute;
		left: 785px;
		top: 760px;
		color: #f0f0f0;
		font-size: 9px;
		font-weight: 600;
	}
	.frame-hud {
		position: absolute;
		left: 1450px;
		top: 759px;
		width: 96px;
		display: flex;
		justify-content: space-between;
		color: #eee;
		font-weight: 600;
		font-size: 8.500px;
	}

	/* right column */
	.right {
		flex: none;
		width: 275px;
		display: flex;
		box-sizing: border-box;
		padding-left: 8px;
	}
	.right-main {
		width: 252px;
		display: flex;
		flex-direction: column;
	}
	.cb-top {
		height: 22px;
		display: flex;
		justify-content: flex-end;
		align-items: center;
		gap: 3px;
		padding-right: 4px;
	}
	.cb-menu {
		height: 15px;
		display: flex;
		gap: 13px;
		padding-left: 78px;
		align-items: center;
		box-sizing: border-box;
	}
	.channels {
		height: 70px;
		padding-top: 12px;
		box-sizing: border-box;
	}
	.ch {
		height: 12px;
		display: flex;
		align-items: center;
		justify-content: flex-end;
		padding-right: 2px;
	}
	.ch label {
		margin-right: 2px;
	}
	.ch i {
		width: 5px;
		height: 11px;
		background: #c0302e;
	}
	.ch i.pale {
		background: #d07878;
	}
	.ch span {
		width: 50px;
		height: 11px;
		background: #2a2a2a;
		color: #ccc;
		padding-left: 2px;
		line-height: 11px;
		box-sizing: border-box;
	}
	.shape-head {
		height: 13px;
		background: #3a3a3a;
		color: #ccc;
		padding-left: 76px;
		line-height: 13px;
		font-weight: 600;
	}
	.shape-body {
		height: 68px;
		background: #454545;
		padding: 50px 0 0 76px;
		box-sizing: border-box;
		color: #ddd;
		font-weight: 600;
		font-size: 8.300px;
		line-height: 12px;
	}
	.cb-empty {
		height: 385px;
		background: #292929;
	}
	.dots {
		height: 10px;
		background: #444;
		border-bottom: 1px solid #3a3a3a;
		box-sizing: border-box;
	}
	.layer-ed {
		flex: 1;
		display: flex;
		flex-direction: column;
		padding-top: 1px;
		background: #414141;
		min-height: 0;
	}
	.le-tabs {
		display: flex;
		height: 13px;
		background: #3a3a3a;
	}
	.le-tabs span {
		padding: 0 8px;
		line-height: 13px;
		color: #888;
		background: #3e3e3e;
		margin-right: 1px;
	}
	.le-tabs .active {
		background: #464646;
		color: #ddd;
	}
	.le-menu {
		height: 15px;
		display: flex;
		align-items: center;
		gap: 10px;
		padding-left: 6px;
	}
	.le-tools {
		height: 17px;
		display: flex;
		justify-content: flex-end;
		align-items: center;
		gap: 6px;
		padding-right: 2px;
	}
	.le-list {
		flex: 1;
		background: #272727;
		position: relative;
		padding: 2px 0 0 0;
		margin: 0 3px 0 2px;
	}
	.le-row {
		height: 15px;
		display: flex;
		align-items: center;
		gap: 4px;
		padding-left: 3px;
	}
	.le-row .b {
		width: 13px;
		height: 11px;
		background: #2f2f2f;
		font-size: 8px;
		font-weight: 600;
		text-align: center;
		line-height: 11px;
		color: #ddd;
		margin-right: 1px;
	}
	.le-row em {
		font-style: normal;
		color: #e4e4e4;
		font-size: 8.500px;
	}
	.le-row.sel {
		background: #4b8abb;
	}
	.le-row.sel .b {
		background: #5a98c8;
		border: 1px solid #3a6f98;
		box-sizing: border-box;
		color: #123;
		line-height: 9px;
	}
	.le-row.sel em {
		color: #0e2c48;
	}
	.le-scroll {
		position: absolute;
		left: 0;
		right: 0;
		bottom: 1px;
		height: 10px;
		display: flex;
		align-items: center;
		gap: 3px;
		padding: 0 3px;
		font-size: 8px;
	}
	.le-scroll u {
		flex: 1;
		height: 8px;
		background: #5a5a5a;
		border-radius: 4px;
	}
	.vtabs {
		flex: 1;
		display: flex;
		flex-direction: column;
		align-items: center;
		gap: 14px;
		padding-top: 12px;
	}
	.vtabs span {
		writing-mode: vertical-rl;
		font-size: 7.500px;
		letter-spacing: 0.800px;
		color: #888;
		white-space: nowrap;
	}
	.vtabs .on {
		color: #ddd;
		font-weight: 600;
	}

	/* bottom rows */
	.timeslider {
		height: 57px;
		flex: none;
		display: flex;
		align-items: flex-start;
		padding: 7px 0 0 10px;
		box-sizing: border-box;
		position: relative;
		background: linear-gradient(#3a3a3a 0 7px, #444 7px);
	}
	.ts {
		width: 1688px;
		height: 47px;
		background: #2c2c2c;
		padding-left: 8px;
		box-sizing: border-box;
		display: flex;
		border-bottom: 2px solid #5e82a0;
		border-image: linear-gradient(90deg, #2c2c2c 8px, #5e82a0 8px) 1;
		flex: none;
	}
	.fr {
		flex: 0 0 55.760px;
		position: relative;
		font-size: 9px;
		color: #888;
	}
	.fr::before {
		content: "";
		position: absolute;
		left: 0;
		top: 10px;
		bottom: 0;
		width: 1px;
		background: #b4b4b4;
	}
	.fr.key::after {
		content: "";
		position: absolute;
		left: 0;
		top: 0;
		height: 13px;
		width: 2px;
		background: #c23030;
	}
	.fr > span {
		position: absolute;
		left: 9px;
		top: 0;
		line-height: 12px;
	}
	.fr.cur {
		background: #5e5e5e;
	}
	.fr > .curlabel {
		top: 30px;
		left: 11px;
		color: #ddd;
	}
	.curfield {
		width: 66px;
		height: 14px;
		margin: 6px 0 0 6px;
		background: #2c2c2c;
		padding-left: 3px;
		line-height: 14px;
		box-sizing: border-box;
		flex: none;
	}
	.play {
		display: flex;
		margin: 5px 0 0 5px;
	}
	.play :global(.icon) {
		width: 17.300px;
	}
	.range {
		height: 27px;
		flex: none;
		display: flex;
		align-items: flex-start;
		padding: 5px 0 0 10px;
		box-sizing: border-box;
		border-bottom: 1px solid #383838;
	}
	.range > .sep {
		margin: 2px 0 0 3px;
	}
	.range > .tri {
		margin-top: 1px;
		line-height: 17px;
		width: 19px;
	}
	.num {
		height: 17px;
		background: #2c2c2c;
		line-height: 17px;
		padding-left: 3px;
		box-sizing: border-box;
		flex: none;
	}
	.first {
		width: 66px;
		margin-right: 7px;
	}
	.second {
		width: 65px;
		margin-right: 12px;
	}
	.third {
		width: 66px;
		margin-left: 15px;
		margin-right: 6px;
	}
	.fourth {
		width: 66px;
	}
	.bar {
		width: 1209px;
		height: 17px;
		flex: none;
		background: #5a5a5a;
		display: flex;
		align-items: center;
		box-sizing: border-box;
		padding: 0 2px;
		gap: 2px;
	}
	.bar i {
		width: 10px;
		height: 12px;
		background: #a8a8a8;
		border-radius: 2px;
	}
	.bar em {
		margin-left: auto;
		font-style: normal;
	}
	.pick {
		height: 17px;
		width: 75px;
		line-height: 17px;
		padding-left: 3px;
		box-sizing: border-box;
		background: #474747;
		white-space: nowrap;
	}
	.fps {
		height: 17px;
		width: 72px;
		margin-left: 9px;
		background: #5a5a5a;
	}
	.charset {
		margin-right: 3px;
	}
	.animl {
		margin-right: 4px;
	}
	.range-icons {
		display: flex;
		align-items: center;
		gap: 4px;
		margin-left: 10px;
		height: 17px;
	}
	.range-icons :global(.hl) {
		padding: 1px 2px;
	}
	.mel {
		height: 26px;
		flex: none;
		display: flex;
		align-items: center;
		padding-left: 18px;
		box-sizing: border-box;
		border-bottom: 1px solid #383838;
	}
	.mel-l {
		width: 26px;
		color: #d0d0d0;
	}
	.mel-in {
		width: 1853px;
		height: 17px;
		background: #2c2c2c;
		margin-right: 2px;
	}
	.help {
		height: 19px;
		flex: none;
		display: flex;
		align-items: center;
		padding-left: 18px;
		font-size: 8px;
		color: #b0b0b0;
	}
	.v1 {
		margin-left: 16px;
	}
	.v2 {
		margin-left: 15px;
	}
	.v3 {
		margin-left: 16px;
	}

	/* windows taskbar */
	.taskbar {
		height: 30px;
		flex: none;
		background: #16181c;
		display: flex;
		align-items: center;
		color: #e4e4e4;
	}
	.win {
		margin: 0 12px 0 12px;
	}
	.search {
		width: 257px;
		height: 30px;
		background: #f6f6f6;
		display: flex;
		align-items: center;
		gap: 7px;
		padding-left: 9px;
		box-sizing: border-box;
		color: #333;
		font-size: 10.500px;
	}
	.task-icons {
		display: flex;
		padding-left: 1px;
	}
	.ti {
		flex: 0 0 36.600px;
		height: 30px;
		display: flex;
		align-items: center;
		justify-content: center;
		box-sizing: border-box;
	}
	.ti.run {
		border-bottom: 2px solid #7fa8c8;
	}
	.ti.active {
		background: #3a3d42;
	}
	.tray {
		margin-left: auto;
		display: flex;
		align-items: center;
		gap: 6px;
		padding-right: 18px;
	}
	.caret {
		font-size: 12px;
		margin-right: 2px;
	}
	.eng {
		font-size: 9px;
		margin: 0 -3px 0 0;
	}
	.clock {
		display: flex;
		flex-direction: column;
		align-items: center;
		font-size: 9px;
		line-height: 13px;
		margin-right: 11px;
	}

	/* graph editor */
	.graph-win {
		position: absolute;
		left: 180px;
		top: 109px;
		width: 1547px;
		height: 403px;
		display: flex;
		flex-direction: column;
		background: #444;
		border: 1px solid #6c6c6c;
		border-top: 0;
		box-sizing: border-box;
		box-shadow: 0 0 3px #111;
	}
	.gw-title {
		height: 23px;
		flex: none;
		background: #fff;
		color: #555;
		display: flex;
		align-items: center;
		gap: 4px;
		padding-left: 6px;
		font-size: 8.500px;
	}
	.gw-btns {
		margin-left: auto;
		display: flex;
		padding-right: 2px;
		color: #444;
		font-size: 11px;
	}
	.gw-menu {
		height: 20px;
		flex: none;
		display: flex;
		align-items: center;
		gap: 9px;
		padding-left: 7px;
	}
	.gw-tools {
		height: 16px;
		flex: none;
		display: flex;
		align-items: center;
		padding: 0 0 3px 3px;
		box-sizing: border-box;
		position: relative;
	}
	.gw-tools > :global(.icon) {
		width: 18.600px;
	}
	.stats {
		margin: 0 4px 0 2px;
		font-weight: 600;
	}
	.pink {
		height: 14px;
		background: #c79ccb;
		color: #6a4a6e;
		padding-left: 3px;
		line-height: 14px;
		box-sizing: border-box;
		font-size: 8px;
	}
	.p1 {
		width: 66px;
		margin-right: 4px;
	}
	.p2 {
		width: 70px;
		margin-right: 6px;
	}
	.gt-mid {
		display: flex;
	}
	.gt-mid :global(.icon) {
		width: 19.550px;
		height: 18px;
	}
	.gt-right {
		position: absolute;
		right: 3px;
		top: -1px;
		display: flex;
		gap: 3px;
	}
	.gw-body {
		flex: 1;
		display: flex;
		min-height: 0;
	}
	.outl {
		flex: 1;
		position: relative;
		background: #3e3e3e;
		margin-left: 1px;
		min-width: 0;
	}
	.outl-search {
		height: 24px;
		display: flex;
		align-items: center;
		gap: 4px;
		padding-left: 4px;
		background: #444;
	}
	.sbox {
		width: 130px;
		height: 13px;
		background: #2c2c2c;
		display: flex;
		justify-content: space-between;
		align-items: center;
		padding: 0 2px;
		box-sizing: border-box;
		color: #888;
	}
	.outl-list {
		padding-top: 4px;
		width: 147px;
		overflow: hidden;
	}
	.orow {
		height: 15px;
		position: relative;
		white-space: nowrap;
		display: flex;
		align-items: center;
		overflow: hidden;
	}
	.orow .otext {
		font-style: italic;
		font-size: 8px;
		letter-spacing: -0.150px;
		position: absolute;
	}
	.orow.attr .otext {
		left: 62px;
	}
	.orow.sub .otext {
		left: 71px;
	}
	.orow.node .otext {
		font-style: normal;
		font-size: 8.500px;
		letter-spacing: 0;
		left: 41px;
		color: #bcbcbc;
	}
	.orow.selnode {
		background: #3c4c5c;
	}
	.orow.selrow {
		background: #4a8bbd;
	}
	.gate {
		position: absolute;
		left: 24px;
	}
	.orow.sub .gate {
		left: 33px;
	}
	.wbox {
		position: absolute;
		left: 52px;
		width: 5px;
		height: 5px;
		background: #fff;
	}
	.minus {
		position: absolute;
		left: 3px;
		width: 7px;
		height: 7px;
		border: 1px solid #888;
		border-radius: 50%;
		font-size: 7px;
		line-height: 6px;
		text-align: center;
		color: #aaa;
	}
	.plus {
		position: absolute;
		left: 16px;
		width: 6px;
		height: 6px;
		border: 1px solid #999;
		font-size: 7px;
		line-height: 6px;
		text-align: center;
		color: #aaa;
	}
	.orow.node svg {
		position: absolute;
		left: 27px;
	}
	.vscroll {
		position: absolute;
		right: 5px;
		top: 27px;
		height: 296px;
		width: 8px;
		display: flex;
		flex-direction: column;
		align-items: center;
		font-size: 8px;
		line-height: 8px;
	}
	.vscroll u {
		width: 7px;
		flex: 1;
		background: #5a5a5a;
		border-radius: 3px;
		margin: 60px 0 0 0;
	}
	.hscroll {
		position: absolute;
		left: 2px;
		bottom: 2px;
		width: 146px;
		display: flex;
		align-items: center;
		font-size: 8px;
		gap: 2px;
	}
	.hscroll u {
		width: 100px;
		height: 7px;
		background: #5a5a5a;
		border-radius: 3px;
		margin-left: 2px;
	}
	.hscroll .rt {
		margin-left: auto;
	}
	.graph {
		flex: none;
	}
	.rl {
		font-size: 8px;
		fill: #6e6e6e;
		text-anchor: middle;
	}
	.tag {
		font-size: 8px;
		text-anchor: middle;
		font-weight: 700;
	}
	.tag.w {
		fill: #ddd;
	}
	.tag.k {
		fill: #222;
	}

	/* watermark layer */
	.marks {
		position: absolute;
		inset: 0;
		pointer-events: none;
		overflow: hidden;
	}
	.mark {
		position: absolute;
		white-space: nowrap;
		transform: translate(-50%, -50%) rotate(-24deg);
		color: rgba(172, 172, 172, 0.2);
		font-weight: 700;
		line-height: 1;
	}
	.mark.en {
		font-family: "DejaVu Serif", "Liberation Serif", serif;
		font-size: 60px;
	}
	.mark.cn {
		font-family: "Noto Sans CJK SC", sans-serif;
		font-size: 62px;
	}
	.site {
		position: absolute;
		left: 875px;
		top: 9px;
		font-family: "Liberation Sans", sans-serif;
		font-weight: 700;
		font-size: 30px;
		line-height: 36px;
		color: rgba(150, 150, 150, 0.6);
	}
	.site-logo {
		position: absolute;
		left: 866px;
		top: 1026px;
	}
	.site-cn {
		position: absolute;
		left: 922px;
		top: 1027px;
		font-family: "Noto Sans CJK SC", sans-serif;
		font-weight: 700;
		font-size: 32px;
		line-height: 40px;
		color: rgba(190, 190, 190, 0.75);
	}
</style>
